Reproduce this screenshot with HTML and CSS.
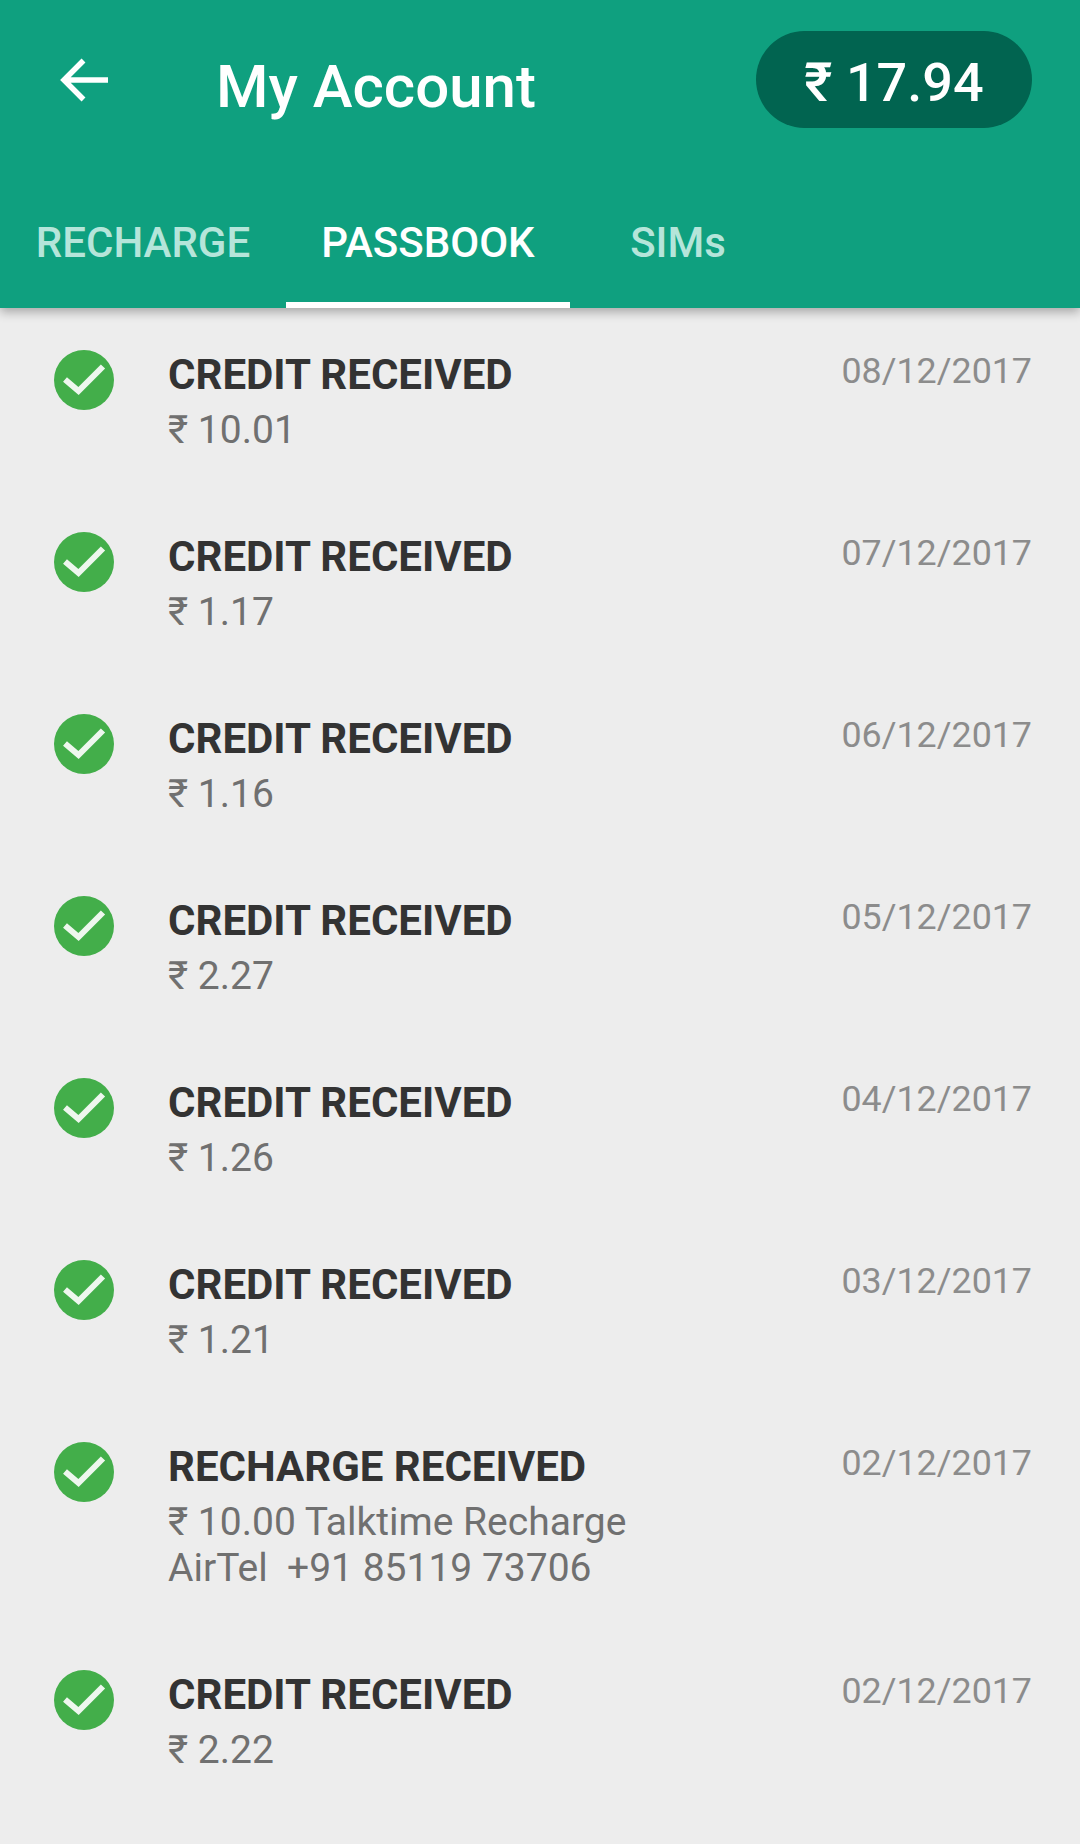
FILE: index.html
```html
<!DOCTYPE html>
<html lang="en">

<head>
    <meta charset="UTF-8">
    <meta name="viewport" content="width=device-width, initial-scale=1.0">
    <title>My Account</title>
    <link rel="stylesheet" href="styles.css">
</head>

<body>
    <header class="app-header">
        <div class="toolbar">
            <svg class="back-icon" width="50" height="50" viewBox="0 0 50 50">
                <path d="M5 25H49M24.5 5.5L5 25L24.5 44.5" fill="none" stroke="#fff" stroke-width="5.5" />
            </svg>
            <h1 class="title">My Account</h1>
            <div class="balance">₹ 17.94</div>
        </div>
        <nav class="tabs">
            <div class="tab tab-recharge">RECHARGE</div>
            <div class="tab tab-passbook active">PASSBOOK</div>
            <div class="tab tab-sims">SIMs</div>
        </nav>
    </header>

    <main class="list">
        <div class="row">
            <svg class="check" viewBox="0 0 60 60"><circle cx="30" cy="30" r="30" fill="#43ae4a" /><path d="M11 29.5L24.5 41L49 16.5" fill="none" stroke="#eef7ee" stroke-width="6" /></svg>
            <div class="info">
                <div class="name">CREDIT RECEIVED</div>
                <div class="detail">₹ 10.01</div>
            </div>
            <div class="date">08/12/2017</div>
        </div>
        <div class="row">
            <svg class="check" viewBox="0 0 60 60"><circle cx="30" cy="30" r="30" fill="#43ae4a" /><path d="M11 29.5L24.5 41L49 16.5" fill="none" stroke="#eef7ee" stroke-width="6" /></svg>
            <div class="info">
                <div class="name">CREDIT RECEIVED</div>
                <div class="detail">₹ 1.17</div>
            </div>
            <div class="date">07/12/2017</div>
        </div>
        <div class="row">
            <svg class="check" viewBox="0 0 60 60"><circle cx="30" cy="30" r="30" fill="#43ae4a" /><path d="M11 29.5L24.5 41L49 16.5" fill="none" stroke="#eef7ee" stroke-width="6" /></svg>
            <div class="info">
                <div class="name">CREDIT RECEIVED</div>
                <div class="detail">₹ 1.16</div>
            </div>
            <div class="date">06/12/2017</div>
        </div>
        <div class="row">
            <svg class="check" viewBox="0 0 60 60"><circle cx="30" cy="30" r="30" fill="#43ae4a" /><path d="M11 29.5L24.5 41L49 16.5" fill="none" stroke="#eef7ee" stroke-width="6" /></svg>
            <div class="info">
                <div class="name">CREDIT RECEIVED</div>
                <div class="detail">₹ 2.27</div>
            </div>
            <div class="date">05/12/2017</div>
        </div>
        <div class="row">
            <svg class="check" viewBox="0 0 60 60"><circle cx="30" cy="30" r="30" fill="#43ae4a" /><path d="M11 29.5L24.5 41L49 16.5" fill="none" stroke="#eef7ee" stroke-width="6" /></svg>
            <div class="info">
                <div class="name">CREDIT RECEIVED</div>
                <div class="detail">₹ 1.26</div>
            </div>
            <div class="date">04/12/2017</div>
        </div>
        <div class="row">
            <svg class="check" viewBox="0 0 60 60"><circle cx="30" cy="30" r="30" fill="#43ae4a" /><path d="M11 29.5L24.5 41L49 16.5" fill="none" stroke="#eef7ee" stroke-width="6" /></svg>
            <div class="info">
                <div class="name">CREDIT RECEIVED</div>
                <div class="detail">₹ 1.21</div>
            </div>
            <div class="date">03/12/2017</div>
        </div>
        <div class="row row-tall">
            <svg class="check" viewBox="0 0 60 60"><circle cx="30" cy="30" r="30" fill="#43ae4a" /><path d="M11 29.5L24.5 41L49 16.5" fill="none" stroke="#eef7ee" stroke-width="6" /></svg>
            <div class="info">
                <div class="name">RECHARGE RECEIVED</div>
                <div class="detail">₹ 10.00 Talktime Recharge</div>
                <div class="detail">AirTel&nbsp; +91 85119 73706</div>
            </div>
            <div class="date">02/12/2017</div>
        </div>
        <div class="row">
            <svg class="check" viewBox="0 0 60 60"><circle cx="30" cy="30" r="30" fill="#43ae4a" /><path d="M11 29.5L24.5 41L49 16.5" fill="none" stroke="#eef7ee" stroke-width="6" /></svg>
            <div class="info">
                <div class="name">CREDIT RECEIVED</div>
                <div class="detail">₹ 2.22</div>
            </div>
            <div class="date">02/12/2017</div>
        </div>
    </main>
</body>

</html>
```

FILE: styles.css
```css
body {
    font-family: Roboto, "Noto Sans", sans-serif;
    background-color: #ededed;
    margin: 0;
    height: 1844px;
    overflow: hidden;
}

.app-header {
    background-color: #0fa07f;
    height: 308px;
    box-shadow: 0 4px 10px rgba(0, 0, 0, 0.3);
    display: flex;
    flex-direction: column;
    justify-content: space-between;
}

.toolbar {
    display: flex;
    align-items: center;
    padding: 31px 48px 0 59px;
}

.title {
    font-size: 60px;
    font-weight: 500;
    color: #ffffff;
    margin: 14px 0 0 107px;
    flex: 1;
}

.balance {
    width: 276px;
    height: 97px;
    line-height: 104px;
    border-radius: 49px;
    background-color: #016450;
    color: #ffffff;
    font-size: 54px;
    font-weight: 500;
    text-align: center;
}

.tabs {
    display: flex;
    height: 105px;
}

.tab {
    font-size: 42px;
    font-weight: 500;
    line-height: 80px;
    color: #b5e5da;
    text-align: center;
}

.tab-recharge {
    width: 286px;
}

.tab-passbook {
    width: 284px;
}

.tab-sims {
    width: 216px;
}

.tab.active {
    color: #ffffff;
    border-bottom: 6px solid #ffffff;
}

.row {
    display: flex;
    align-items: flex-start;
    height: 182px;
    padding: 0 48px 0 54px;
}

.row-tall {
    height: 228px;
}

.check {
    width: 60px;
    height: 60px;
    margin-top: 42px;
}

.info {
    flex: 1;
    margin-left: 54px;
    padding-top: 43px;
}

.name {
    font-size: 42px;
    font-weight: 700;
    line-height: 48px;
    margin-bottom: 8px;
    color: #333333;
}

.detail {
    font-size: 39px;
    line-height: 46px;
    color: #707070;
}

.date {
    font-size: 35.8px;
    line-height: 42px;
    margin-top: 42px;
    color: #8c8c8c;
}
```
